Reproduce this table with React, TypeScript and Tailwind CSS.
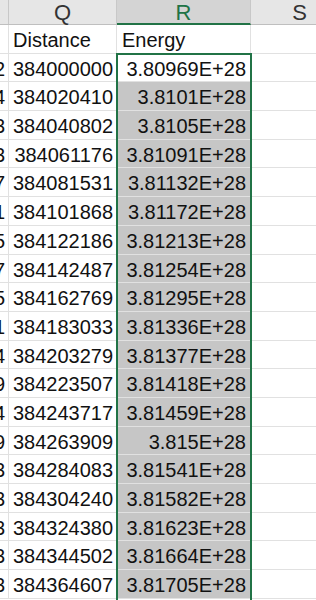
import React from "react";

const dist = [
  "384000000","384020410","384040802","384061176","384081531","384101868","384122186","384142487","384162769","384183033","384203279","384223507","384243717","384263909","384284083","384304240","384324380","384344502","384364607",
];
const energy = [
  "3.80969E+28","3.8101E+28","3.8105E+28","3.81091E+28","3.81132E+28","3.81172E+28","3.81213E+28","3.81254E+28","3.81295E+28","3.81336E+28","3.81377E+28","3.81418E+28","3.81459E+28","3.815E+28","3.81541E+28","3.81582E+28","3.81623E+28","3.81664E+28","3.81705E+28",
];
const prev = ["2","4","3","3","7","1","5","7","5","1","4","9","4","9","3","3","3","3","3"];

export default function App() {
  const font = { fontFamily: '"Liberation Sans", Arial, sans-serif' };
  return (
    <div className="relative w-[316px] h-[600px] overflow-hidden bg-white text-[20px] text-[#111]" style={font}>
      {/* header */}
      <div className="flex h-[25px] bg-[#e6e6e6] border-b border-[#bfbfbf] text-[22px]">
        <div className="w-[9px] shrink-0 border-r border-[#c8c8c8]" />
        <div className="w-[108px] shrink-0 border-r border-[#c8c8c8] flex items-center justify-center leading-none pt-[1px] text-[#333]">Q</div>
        <div className="w-[134px] shrink-0 border-r border-[#c8c8c8] bg-[#d4d4d4] border-b-2 border-b-[#217346] -mb-[1px] flex items-center justify-center leading-none pt-[2px] text-[#217346]">R</div>
        <div className="w-[65px] shrink-0 flex items-center justify-center leading-none pt-[1px] pl-[32px] text-[#333]">S</div>
      </div>
      {/* title row */}
      <div className="flex h-[28.7px] border-b border-[#e1e1e1]">
        <div className="w-[9px] shrink-0 border-r border-[#e1e1e1]" />
        <div className="w-[108px] shrink-0 border-r border-[#e1e1e1] pl-[4px] pt-[3px] leading-[24px]">Distance</div>
        <div className="w-[134px] shrink-0 border-r border-[#e1e1e1] pl-[5px] pt-[3px] leading-[24px]">Energy</div>
        <div className="flex-1" />
      </div>
      {dist.map((d, i) => (
        <div key={i} className="flex h-[28.7px] border-b border-[#e1e1e1]">
          <div className="w-[9px] shrink-0 border-r border-[#e1e1e1] overflow-hidden flex justify-end pr-[3px] pt-[3px] leading-[24px]">
            <span className="shrink-0">{prev[i]}</span>
          </div>
          <div className="w-[108px] shrink-0 border-r border-[#e1e1e1] text-right pr-[3px] pt-[3px] leading-[24px]">{d}</div>
          <div
            className={
              "w-[134px] shrink-0 text-right pr-[5px] pt-[3px] leading-[24px] " +
              (i === 0 ? "bg-white" : "bg-[#c6c6c6]")
            }
          >
            {energy[i]}
          </div>
          <div className="flex-1" />
        </div>
      ))}
      {/* selection border */}
      <div className="absolute left-[116px] top-[53px] w-[136px] h-[560px] border-2 border-[#217346] pointer-events-none" />
    </div>
  );
}
